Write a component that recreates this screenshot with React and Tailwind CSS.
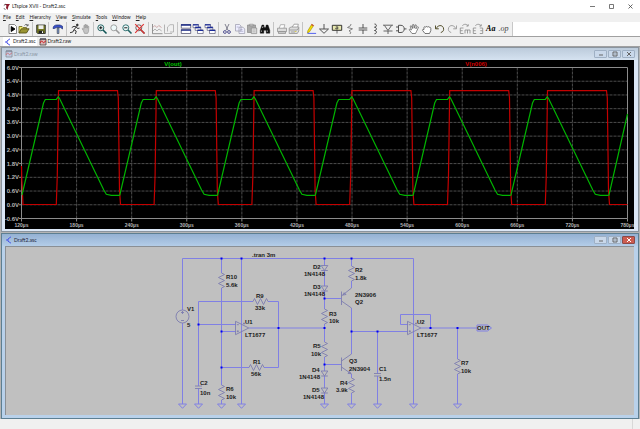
import React from 'react';

const volts = ['6.0V', '5.4V', '4.8V', '4.2V', '3.6V', '3.0V', '2.4V', '1.8V', '1.2V', '0.6V', '0.0V', '-0.6V'];
const times = ['120µs', '180µs', '240µs', '300µs', '360µs', '420µs', '480µs', '540µs', '600µs', '660µs', '720µs', '780µs'];
const cycles = [0, 1, 2, 3, 4, 5];

const LEFT = 21.5;
const RIGHT = 627.5;
const TOP = 67.5;
const BOTTOM = 218.5;
const PERIOD = 97.8;

const gridX = (i) => LEFT + (i * (RIGHT - LEFT)) / 11;
const gridY = (i) => TOP + (i * (BOTTOM - TOP)) / 11;

const greenTrace = cycles
  .map((k) => {
    const b = 58.3 + k * PERIOD;
    return `${b - 36.3},195 ${b - 14.8},103 ${b - 13},99.5 ${b - 2},99.3 ${b},96.8 ${b + 1.5},99 ${b + 45.5},190 ${b + 48},194.3 ${b + 53},195.3 ${b + 60.5},195.3`;
  })
  .join(' ');

const redTrace = cycles
  .map((k) => {
    const b = 58.3 + k * PERIOD;
    return `${b - 2},204.5 ${b - 1},175 ${b + 0.2},90.7 ${b + 59.2},90.7 ${b + 60},98 ${b + 61.2},190 ${b + 62.2},204.5`;
  })
  .join(' ');

const Icon = ({ children }) => (
  <svg viewBox="0 0 12 12" className="h-3 w-3 shrink-0" fill="none" stroke="#333" strokeWidth="0.9">
    {children}
  </svg>
);

const Lens = ({ color = '#333', children }) => (
  <Icon>
    <circle cx="4.8" cy="4.8" r="3" stroke={color} fill="#eefafa" />
    <path d="M7 7l3.5 3.5" stroke={color} strokeWidth="1.6" />
    {children}
  </Icon>
);

const groups = [
  {
    width: 'w-[28px]',
    tools: [
      ['Run', <Icon><path d="M2 1.5h5.5l2 2v7H2z" fill="#fff" stroke="#777" /><path d="M4.2 3.5v5L8 6z" fill="#000" stroke="#000" /></Icon>],
      ['Open', <Icon><path d="M1 10V3.5h3l1 1h3.5V6" fill="#eee86a" stroke="#77702a" /><path d="M1 10l2.3-4.2h7.8L8.5 10z" fill="#9a9432" stroke="#55501a" /><path d="M6.5 2.5c1-1.5 2.5-1.4 3.3 0M10 1v1.8H8.3" strokeWidth="0.7" /></Icon>],
    ],
  },
  {
    width: 'w-[16px]',
    tools: [
      ['Save', <Icon><path d="M1.7 2h8.6v8.5H2.7l-1-1z" fill="#747820" stroke="#333" /><path d="M3.5 2.3h5V6h-5z" fill="#eee" stroke="none" /><path d="M3.7 7.7h4.8v2.6H3.7z" fill="#222" stroke="none" /><path d="M7 8.2h1v1.7H7z" fill="#fff" stroke="none" /></Icon>],
    ],
  },
  {
    width: 'w-[18px]',
    tools: [
      ['Control Panel', <Icon><path d="M1 5.5C1.2 2.8 3 2 5 2h3l2.5 1.2V6L8.7 4.6H4.2L2.5 5.5z" fill="#3a50c8" stroke="#20307a" strokeWidth="0.7" /><path d="M5.2 4.8h1.7v5.7H5.2z" fill="#7a9be0" stroke="#333" strokeWidth="0.6" /></Icon>],
    ],
  },
  {
    width: 'w-[27px]',
    tools: [
      ['Simulate', <Icon><circle cx="8.3" cy="2" r="0.9" fill="#222" /><path d="M7.7 3.5L5 6.7l2.2 1.4-.7 2.9M5 6.7L3.8 9 1 9.7M2.8 4.5L5 3.3l2.3.6 1.2 1.6 2-.4" stroke="#222" /></Icon>],
      ['Halt', <Icon><path d="M3.3 7.5L2 5.8l.7-.5 1.2 1V2.5l.9-.3.3 2.8V1.5h1v3.4l.4-2.9h.9v3.2l.5-2 .9.2-.2 5-1 2H4.5z" fill="#c4c4c4" stroke="#999" strokeWidth="0.7" /></Icon>],
    ],
  },
  {
    width: 'w-[55px]',
    tools: [
      ['Zoom In', <Lens color="#155"><path d="M3.2 4.8h3.2M4.8 3.2v3.2" stroke="#000" /></Lens>],
      ['Pan', <Lens color="#999" />],
      ['Zoom Out', <Lens color="#266"><path d="M3.2 4.8h3.2" stroke="#000" /></Lens>],
      ['Zoom Full', <Lens color="#655"><path d="M1.2 1.2l9.3 9.3M9.8 1.2L1.2 9.8" stroke="#e03030" strokeWidth="1.1" /></Lens>],
    ],
  },
  {
    width: 'w-[29px]',
    tools: [
      ['Autorange', <Icon><path d="M1.5 1v9.7H11.5" stroke="#888" /><path d="M1.8 4.5l2-2 2 2 2-2 2.7 2" stroke="#bb8888" strokeWidth="0.7" /><path d="M2 8l2-2 2 2 2-2 2.7 2" stroke="#999" strokeWidth="0.7" /></Icon>],
      ['Set Limits', <Icon><path d="M1.5 1.5v9H9M4.5 8.5V4L7 1.7h3.5V9H7" stroke="#aaa" strokeWidth="0.8" /><path d="M1 3h1M1 5h1M1 7h1" stroke="#aaa" /></Icon>],
    ],
  },
  {
    width: 'w-[41px]',
    tools: [
      ['Tile', <Icon><path d="M1.3 1.5h9.4v3.7H1.3zM1.3 6.7h9.4v3.8H1.3z" fill="#fff" stroke="#446" strokeWidth="0.7" /><path d="M1 2h10M1 7.1h10" stroke="#1a2a88" strokeWidth="1.4" /></Icon>],
      ['Cascade', <Icon><path d="M1 1.5h5.5v3.2H1zM3.2 4.2h5.6v3.2H3.2zM5.5 7h5.7v3.5H5.5z" fill="#fff" stroke="#446" strokeWidth="0.6" /><path d="M1 1.8h5.5M3.2 4.5h5.6M5.5 7.3h5.7" stroke="#1a2a99" strokeWidth="1.3" /></Icon>],
      ['Close All', <Icon><path d="M1 1.5h5.5v3.2H1zM3.2 4.2h5.6v3.2H3.2zM5.5 7h5.7v3.5H5.5z" fill="#fff" stroke="#446" strokeWidth="0.6" /><path d="M1 1.8h5.5M3.2 4.5h5.6M5.5 7.3h5.7" stroke="#1a2a99" strokeWidth="1.3" /></Icon>],
    ],
  },
  {
    width: 'w-[55px]',
    tools: [
      ['Cut', <Icon><path d="M4 1l3 6.3M8 1L5 7.3" stroke="#667" strokeWidth="0.8" /><circle cx="3.9" cy="9" r="1.4" stroke="#448" /><circle cx="8" cy="9" r="1.4" stroke="#448" /></Icon>],
      ['Copy', <Icon><path d="M1.5 1.5h4l1.5 1.5v5H1.5zM5 4.2h4L10.7 6v4.5H5z" fill="#eef" stroke="#99a" strokeWidth="0.7" /><path d="M6.3 6.5h2.2M6.3 8.3h3M2.7 4h2" stroke="#99b" strokeWidth="0.6" /></Icon>],
      ['Paste', <Icon><path d="M1.5 2h8v7.5h-8z" fill="#aaa" stroke="#888" strokeWidth="0.7" /><path d="M3.7 1.2h3.5v1.6H3.7z" fill="#ddd" stroke="#777" strokeWidth="0.5" /><path d="M5.3 5h5.4v5.6H5.3z" fill="#ddd" stroke="#888" strokeWidth="0.7" /><path d="M6.5 7h3M6.5 8.8h3" stroke="#999" strokeWidth="0.5" /></Icon>],
      ['Find', <Icon><path d="M3 2h1.8l.5 2.5h1.4L7.2 2H9l1.8 5.3v2.9H7.2V7.3H4.8v2.9H1.2V7.3z" fill="#111" stroke="#111" strokeWidth="0.4" /><path d="M2.5 7.5v1.3M8.4 7.5v1.3M4 3.3L3.5 5" stroke="#fff" strokeWidth="0.6" /></Icon>],
    ],
  },
  {
    width: 'w-[29px]',
    tools: [
      ['Print', <Icon><path d="M3.3 5L4.5 1.7h4.3L8 5" fill="#fff" stroke="#999" strokeWidth="0.7" /><path d="M1.5 5.2h9v3.5h-9zM2.5 8.7h7v1.8h-7z" fill="#ddd" stroke="#888" strokeWidth="0.7" /></Icon>],
      ['Print Preview', <Icon><path d="M4 4.5L6 1.2h4.3L9.5 5" fill="#fff" stroke="#888" strokeWidth="0.7" /><path d="M1.2 5l2-1h7.6v4L9.3 10.5H1.2z" fill="#ddd" stroke="#888" strokeWidth="0.7" /><path d="M1.5 7h7.6l1.5-2M3 9h4" stroke="#888" strokeWidth="0.7" /><path d="M6.8 8.5h1.6" stroke="#d8c840" /></Icon>],
    ],
  },
  {
    width: 'w-[209px]',
    tools: [
      ['Wire', <Icon><path d="M2.8 7.8L6.7 1.3l1.9 1.3L4.5 8.8 2.5 10z" fill="#f4e000" stroke="#9a8400" strokeWidth="0.6" /><path d="M6.5 1.5l2 1.3" stroke="#c44" strokeWidth="1.2" /><path d="M2.5 10.4h8.6" stroke="#4455ee" /></Icon>],
      ['Ground', <Icon><path d="M6 1v5M1.5 6h9L6 10.3z" stroke="#444" /></Icon>],
      ['Label Net', <Icon><path d="M1.3 2.3h9.4v5H1.3z" fill="#e8e8b0" stroke="#222" /><path d="M6 7.3v3.2M4.8 3.8h2v2.2h-2v-1h2" stroke="#333" strokeWidth="0.7" /></Icon>],
      ['Resistor', <Icon><path d="M7 1L6.5 2.7 3.5 4.5l5 1.3-3.5 2 1.8 1.4L6 11" stroke="#777" /></Icon>],
      ['Capacitor', <Icon><path d="M6 1v4M6 7v4M1.7 5h8.6M1.7 7h8.6" stroke="#444" /></Icon>],
      ['Inductor', <Icon><path d="M5.5 1c2.5 0 2.5 3.2 0 3.2 2.5 0 2.5 3.3 0 3.3 2.5 0 2.5 3.3 0 3.3" stroke="#333" /></Icon>],
      ['Diode', <Icon><path d="M1 2.2h10M2.5 2.5L6 7.5l3.5-5M1.5 8h9M6 8v3" stroke="#555" /></Icon>],
      ['Component', <Icon><path d="M3.5 2.3H6c4.3 0 4.3 7.2 0 7.2H3.5zM9.2 5.9h2.3M1 4h2.5M1 7.8h2.5" stroke="#444" /></Icon>],
      ['Move', <Icon><path d="M4 10.5L1.2 6.7l.8-.8 1.5 1L2.2 3.3l1-.6 1.4 2.8L4.7 1.6h1.1l.4 3.6 1-3.4 1.1.3-.4 3.7 1.7-2.2.9.7-2 4.2-1 2z" fill="#fff" stroke="#555" strokeWidth="0.7" /></Icon>],
      ['Drag', <Icon><path d="M4 10.5L1.5 7.3l.5-1.1 1 .3V4.3c.5-.9 1.3-.9 1.6 0C5 3.3 6 3.2 6.5 4c.6-.7 1.5-.5 1.7.4.8-.5 1.5 0 1.6.8v2.5L8.5 10.5z" fill="#fff" stroke="#555" strokeWidth="0.8" /></Icon>],
      ['Undo', <Icon><path d="M2.2 5.5C4 1.8 8 1.8 9.3 4.5c1 2.4-.2 4.6-2.5 5M1.5 2.5v3.3h3.3" stroke="#443f18" /></Icon>],
      ['Redo', <Icon><path d="M9.8 5.5C8 1.8 4 1.8 2.7 4.5c-1 2.4.2 4.6 2.5 5M10.5 2.5v3.3H7.2" stroke="#999" /></Icon>],
      ['Rotate', <Icon><path d="M4.5 5H1.3v5.5h3.2M1.3 7.7h2.4M6 10.5V7h5v3.5M8.5 7v3.5M3.3 2.8c1.5-2 4.2-2 5.7 0M9.2 1.2v1.9H7.4" stroke="#888" strokeWidth="0.8" /></Icon>],
      ['Mirror', <Icon><path d="M4.2 5H1.3v5.5h2.9M1.3 7.7h2.4M7.8 5h2.9v5.5H7.8M10.7 7.7H8.3M3.3 2.8c1.5-2 4.2-2 5.7 0M9.2 1.2v1.9H7.4" stroke="#888" strokeWidth="0.8" /></Icon>],
      ['Text', <span className="font-['Liberation_Serif',serif] text-[8px] leading-3 font-bold text-black italic">Aa</span>],
      ['SPICE Directive', <span className="font-['Liberation_Serif',serif] text-[8px] leading-3 text-[#444] italic">.op</span>],
    ],
  },
];

const Toolbar = () => (
  <div className="flex h-[15px] border-b border-[#a0a0a0] bg-white">
    <div className="flex border-r border-[#c8c8c8] bg-[#f0f0f0] pl-[5px]">
      {groups.map((g, i) => (
        <div key={i} className={`flex px-[2px] ${g.width} ${i < groups.length - 1 ? 'border-r border-[#c4c4c4]' : ''}`}>
          {g.tools.map(([name, icon]) => (
            <button key={name} aria-label={name} className="flex min-w-0 flex-1 items-center justify-center">
              {icon}
            </button>
          ))}
        </div>
      ))}
    </div>
  </div>
);

const SchematicIcon = () => (
  <svg viewBox="0 0 8 8" className="h-2 w-2 shrink-0" fill="none" stroke="#4a55e8">
    <path d="M6 .8L3 3v2.2l3 2M1 4h2" />
  </svg>
);

const WaveIcon = ({ faded }) => (
  <svg viewBox="0 0 8 8" className={faded ? 'h-2 w-2 shrink-0 opacity-50' : 'h-2 w-2 shrink-0'} fill="none">
    <path d="M1 1h6v6H1z" fill={faded ? '#b8c0e0' : '#d8b8b8'} stroke="#444" strokeWidth="0.8" />
    <path d="M1 5l1.5-2.2 2 2 2.5-2" stroke="#d02020" />
    <path d="M1 1h6" stroke="#334" />
  </svg>
);

const DocButton = ({ name, close, children }) => (
  <button
    aria-label={name}
    className={
      close
        ? 'flex h-2 w-[13px] items-center justify-center rounded-[1px] border border-[#8c4a48] bg-[#cc5c50]'
        : 'flex h-2 w-[13px] items-center justify-center rounded-[1px] border border-[#9fb0c4] bg-[#c9d8ea]'
    }
  >
    <svg viewBox="0 0 6 6" className="h-[6px] w-[6px]" fill="none" stroke={close ? '#fff' : '#666'}>
      {children}
    </svg>
  </button>
);

const DocWindow = ({ title, icon, active, children }) => (
  <section
    className={
      active
        ? 'mr-px ml-px border border-[#5d7f92] bg-[#b9d1ea] pr-1 pb-[3px] pl-[3px]'
        : 'mr-px ml-px border border-[#8a949e] bg-[#dbe7f6] pr-1 pb-[2px] pl-[3px]'
    }
  >
    <header
      className={
        active
          ? '-mr-1 -ml-[3px] flex h-3 items-center gap-px bg-linear-to-b from-[#94b1d3] to-[#b4cde8] pr-[3px] pl-[3px]'
          : '-mr-1 -ml-[3px] flex h-3 items-center gap-px bg-linear-to-b from-[#bccbdb] to-[#d5e2f0] pr-[3px] pl-[3px]'
      }
    >
      {icon}
      <h2 className={active ? 'text-[5px] leading-3 text-[#223]' : 'text-[5px] leading-3 text-[#8a96a4]'}>{title}</h2>
      <div className="ml-auto flex gap-px">
        <DocButton name="Minimize"><path d="M1 4h4" /></DocButton>
        <DocButton name="Maximize"><path d="M1 1h4v4H1zM2.5 3h1" /></DocButton>
        <DocButton name="Close" close={active}><path d="M1 1l4 4M5 1L1 5" /></DocButton>
      </div>
    </header>
    {children}
  </section>
);

const Waveform = () => (
  <svg viewBox="5 60 629 169" className="block h-auto w-full bg-black font-['Liberation_Sans',sans-serif]" fill="none">
    <g stroke="#4c4c4c" strokeDasharray="3 1">
      {volts.slice(1, -1).map((v, i) => (
        <path key={v} d={`M${LEFT} ${gridY(i + 1)}H${RIGHT}`} />
      ))}
      {times.slice(1, -1).map((t, i) => (
        <path key={t} d={`M${gridX(i + 1)} ${TOP}V${BOTTOM}`} />
      ))}
    </g>
    <g stroke="#8c8c8c">
      <path d={`M${LEFT} ${TOP}H${RIGHT}V${BOTTOM}H${LEFT}z`} />
      {volts.map((v, i) => (
        <path key={v} d={`M19 ${gridY(i)}h3`} />
      ))}
      {times.map((t, i) => (
        <path key={t} d={`M${gridX(i)} ${BOTTOM}v3`} />
      ))}
    </g>
    <g fill="#b4b4b4" fontSize="6" fontWeight="bold" textAnchor="end">
      {volts.map((v, i) => (
        <text key={v} x="19" y={gridY(i) + 2}>{v}</text>
      ))}
    </g>
    <g fill="#b4b4b4" fontSize="5" fontWeight="bold" textAnchor="middle">
      {times.map((t, i) => (
        <text key={t} x={gridX(i)} y="227">{t}</text>
      ))}
    </g>
    <g fontSize="6" fontWeight="bold" textAnchor="middle">
      <text x="173" y="66" fill="#00c800">V(out)</text>
      <text x="476" y="66" fill="#d00000">V(n006)</text>
    </g>
    <polyline points={`21.5,166 21.8,180 23,204.5 ${redTrace} 627.5,204.5`} stroke="#c40000" strokeWidth="1.2" />
    <polyline points={`${greenTrace} 609,195 627.5,114`} stroke="#00b400" strokeWidth="1.2" />
  </svg>
);

const Resistor = ({ x, y, flat }) => (
  <path
    transform={flat ? `translate(${x} ${y}) rotate(-90)` : `translate(${x} ${y})`}
    d="M0 0l3 1.5-6 3 6 3-6 3 6 3-3 1.5"
  />
);

const Diode = ({ x, y }) => <path d={`M${x - 3.3} ${y}h6.6l-3.3 5zM${x - 3.3} ${y + 5}h6.6`} />;

const Ground = ({ x }) => <path d={`M${x - 4} 404h8l-4 4.3z`} />;

const OpAmp = ({ x }) => (
  <path d={`M${x} 321.3v13.4l13.3-6.7zM${x + 1.3} 324.7h2M${x + 1.3} 331.3h2M${x + 2.3} 330.3v2M${x + 7.5} 323.5h2M${x + 8.5} 322.5v2`} />
);

const wires = [
  'M182.5 404V323M182.5 310V258.5H413.5V404',
  'M221.5 258.5V273M221.5 288V385M221.5 400V404',
  'M241.5 258.5V404',
  'M198.5 404V388.5M198.5 386V301.5H253M268 301.5H278.5V367.5H264M249 367.5H221.5',
  'M198.5 324.5H235.5M221.5 331.5H235.5M249 328H324.5',
  'M324.5 258.5V265.5M324.5 270.5V286M324.5 291V309M324.5 324V342M324.5 357V371M324.5 376V388M324.5 393V404',
  'M324.5 298.5H341M324.5 364.5H341',
  'M351.5 258.5V266M351.5 281V288M351.5 308V354M351.5 374V378M351.5 393V404',
  'M351.5 331.5H407.5M377.5 331.5V373.5M377.5 376V404',
  'M407.5 324.5H400.5V314.5H430.5V328M420.5 328H477M457.5 328V359M457.5 374V404',
];

const junctions = [
  [221.5, 258.5], [241.5, 258.5], [324.5, 258.5], [351.5, 258.5], [198.5, 324.5], [221.5, 331.5],
  [221.5, 367.5], [278.5, 328], [324.5, 298.5], [324.5, 328], [324.5, 364.5], [351.5, 331.5],
  [377.5, 331.5], [430.5, 328], [457.5, 328],
];

const labels = [
  ['.tran 3m', 252, 257], ['R10', 226, 279], ['5.6k', 226, 287], ['R9', 256, 298], ['33k', 255, 310],
  ['V1', 187, 311], ['5', 187, 327], ['U1', 245, 324], ['LT1677', 245, 337], ['R1', 253, 364],
  ['56k', 251, 376], ['C2', 200, 385], ['10n', 200, 395], ['R6', 226, 391], ['10k', 226, 399],
  ['D2', 313, 269], ['1N4148', 304, 276], ['D3', 313, 289], ['1N4148', 304, 296], ['R2', 355, 272],
  ['1.8k', 355, 280], ['2N3906', 355, 297], ['Q2', 355, 304], ['R3', 329, 316], ['10k', 329, 323],
  ['R5', 313, 348], ['10k', 311, 356], ['D4', 312, 372], ['1N4148', 299, 379], ['D5', 312, 392],
  ['1N4148', 303, 399], ['Q3', 349, 363], ['2N3904', 349, 371], ['R4', 340, 385], ['3.9k', 336, 392],
  ['C1', 379, 371], ['1.5n', 379, 381], ['U2', 417, 324], ['LT1677', 417, 337], ['R7', 461, 365],
  ['10k', 461, 373], ['OUT', 477, 330],
];

const Schematic = () => (
  <svg viewBox="5 246 629 169" className="block h-auto w-full bg-[#c0c0c0] font-['Liberation_Sans',sans-serif]" fill="none">
    <path d="M5 246.5H634M5.5 246V415" stroke="#8b8f94" />
    <g stroke="#8080e4">
      {wires.map((d) => (
        <path key={d} d={d} />
      ))}
      {[182.5, 198.5, 221.5, 241.5, 324.5, 351.5, 377.5, 413.5, 457.5].map((x) => (
        <Ground key={x} x={x} />
      ))}
      <path d="M477 325h10.5l4 3-4 3H477z" />
    </g>
    <g stroke="#7d7db0" strokeWidth="0.9">
      <circle cx="182.5" cy="316.5" r="6.5" />
      <path d="M182.5 311v3M181 312.5h3M181 320.5h3" />
      <Resistor x={221.5} y={273} />
      <Resistor x={221.5} y={385} />
      <Resistor x={351.5} y={266} />
      <Resistor x={324.5} y={309} />
      <Resistor x={324.5} y={342} />
      <Resistor x={351.5} y={378} />
      <Resistor x={457.5} y={359} />
      <Resistor x={253} y={301.5} flat />
      <Resistor x={249} y={367.5} flat />
      <Diode x={324.5} y={265.5} />
      <Diode x={324.5} y={286} />
      <Diode x={324.5} y={371} />
      <Diode x={324.5} y={388} />
      <path d="M195 386h7M195 388.5h7M374 373.5h7M374 376h7" />
      <path d="M341.5 291.5v13.5M341.5 296l10-8M341.5 301l10 7M343 295l3-.5-1.8-1.8z" />
      <path d="M341.5 357.5v13.5M341.5 361l10-7M341.5 367l10 7M351 373.7l-3-.3 1.5-2z" />
      <OpAmp x={235.5} />
      <OpAmp x={407.5} />
    </g>
    <g fill="#0000f0">
      {junctions.map(([x, y]) => (
        <rect key={`${x} ${y}`} x={x - 1} y={y - 1} width="2" height="2" />
      ))}
    </g>
    <g fill="#1c1c1c" fontSize="6" fontWeight="bold">
      {labels.map(([text, x, y]) => (
        <text key={`${x} ${y}`} x={x} y={y}>{text}</text>
      ))}
    </g>
  </svg>
);

const menus = ['File', 'Edit', 'Hierarchy', 'View', 'Simulate', 'Tools', 'Window', 'Help'];

export default function App() {
  return (
    <div className="bg-[#f0f0f0] font-[Lato,sans-serif] text-[5px] text-[#222]">
      <header className="flex h-[13px] items-center bg-white pr-[6px] pl-[3px]">
        <svg viewBox="0 0 8 8" className="mr-px h-2 w-2" fill="none">
          <path d="M1 1h6L5.5 3.2 4.5 7 3 5l.5-2.5z" fill="#8c1a2c" />
          <path d="M.8 2.5L3 1M.8 5L2.5 7" stroke="#555" strokeWidth="0.8" />
        </svg>
        <h1>LTspice XVII - Draft2.asc</h1>
        <div className="ml-auto flex gap-3">
          <button aria-label="Minimize">
            <svg viewBox="0 0 7 7" className="h-[7px] w-[7px]" stroke="#555" strokeWidth="0.8"><path d="M1 3.5h5" /></svg>
          </button>
          <button aria-label="Maximize">
            <svg viewBox="0 0 7 7" className="h-[7px] w-[7px]" fill="none" stroke="#555" strokeWidth="0.8"><path d="M1.5 1.5h4v4h-4z" /></svg>
          </button>
          <button aria-label="Close">
            <svg viewBox="0 0 7 7" className="h-[7px] w-[7px]" stroke="#444" strokeWidth="0.8"><path d="M1.5 1.5l4 4M5.5 1.5l-4 4" /></svg>
          </button>
        </div>
      </header>
      <nav className="flex h-[9px] items-center gap-[5px] pl-[3px]">
        {menus.map((m) => (
          <button key={m} className="leading-[9px]">
            <span className="underline">{m[0]}</span>{m.slice(1)}
          </button>
        ))}
      </nav>
      <Toolbar />
      <div className="flex h-[9px] pl-[3px]">
        <button className="flex items-center gap-px bg-white px-px">
          <SchematicIcon />
          Draft2.asc
        </button>
        <button className="flex items-center gap-px px-[2px]">
          <WaveIcon />
          Draft2.raw
        </button>
      </div>
      <main className="flex flex-col gap-px border-t border-[#a0a0a0] bg-[#b4b4b4]">
        <DocWindow title="Draft2.raw" icon={<WaveIcon faded />}>
          <Waveform />
        </DocWindow>
        <DocWindow title="Draft2.asc" icon={<SchematicIcon />} active>
          <Schematic />
        </DocWindow>
      </main>
      <footer className="flex h-[10px] justify-end">
        <div className="w-2 border-l border-[#d8d8d8]"></div>
      </footer>
    </div>
  );
}
